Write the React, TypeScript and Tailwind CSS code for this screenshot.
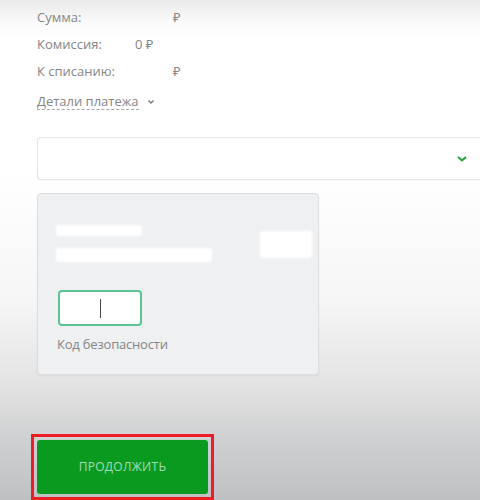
import React from 'react';

const Row: React.FC<{ label: string; value: React.ReactNode; valueClass: string }> = ({ label, value, valueClass }) => (
  <div className="flex items-center h-[27px]">
    <span className="w-[98px]">{label}</span>
    <span className={valueClass}>{value}</span>
  </div>
);

const Blot: React.FC<{ className: string }> = ({ className }) => (
  <div className={`bg-white rounded-[3px] blur-[1px] ${className}`} />
);

export default function App() {
  return (
    <div
      className="w-[480px] h-[500px] overflow-hidden text-[13px] text-[#858585] bg-[linear-gradient(180deg,#e9e9e9_0px,#fafafa_22px,#ffffff_36px,#ffffff_170px,#f6f6f6_300px,#e4e4e4_380px,#cfd0d1_440px,#bfc0c2_500px)]"
      style={{ fontFamily: '"Open Sans", "Noto Sans", sans-serif' }}
    >
      <div className="pl-[37px] pt-[4px]">
        <Row label="Сумма:" value="₽" valueClass="ml-[38px]" />
        <Row label="Комиссия:" value="0 ₽" valueClass="" />
        <Row label="К списанию:" value="₽" valueClass="ml-[38px]" />
        <div className="flex items-center h-[32px] gap-[8px]">
          <span className="border-b border-dashed border-[#a8a8a8] leading-[16px]">Детали платежа</span>
          <svg width="8" height="6" viewBox="0 0 8 6" className="mt-[1px]">
            <path d="M1.5 1.5 L4 4 L6.5 1.5" fill="none" stroke="#777" strokeWidth="1.4" />
          </svg>
        </div>
      </div>

      <div className="ml-[37px] mt-[20px] h-[43px] bg-white border border-[#e6e6e6] rounded-l-[4px] border-r-0 flex items-center justify-end pr-[12px] shadow-[0_1px_1px_rgba(0,0,0,0.03)]">
        <svg width="12" height="8" viewBox="0 0 12 8">
          <path d="M2 2 L6 5.5 L10 2" fill="none" stroke="#21a038" strokeWidth="2" />
        </svg>
      </div>

      <div className="ml-[37px] mt-[13px] w-[282px] h-[182px] bg-[#eef0f2] border border-[#dcdee0] rounded-[4px] pt-[31px] pl-[18px] shadow-[0_1px_2px_rgba(0,0,0,0.06)]">
        <div className="flex">
          <div className="flex flex-col gap-[12px]">
            <Blot className="w-[86px] h-[11px]" />
            <Blot className="w-[156px] h-[14px]" />
          </div>
          <Blot className="ml-[48px] mt-[6px] w-[52px] h-[27px]" />
        </div>
        <div className="mt-[28px] ml-[2px] w-[84px] h-[36px] bg-white border-2 border-[#5cc492] rounded-[4px] flex items-center justify-center">
          <div className="w-[1px] h-[19px] bg-[#444]" />
        </div>
        <div className="mt-[9px] ml-[1px] tracking-[-0.2px]">Код безопасности</div>
      </div>

      <div className="ml-[31px] mt-[59px] w-[183px] h-[66px] border-[3px] border-[#ee1c24] p-[3px]">
        <div className="w-full h-full bg-[#0a9a20] rounded-[3px] flex items-center justify-center text-[12px] font-medium tracking-[0.3px] text-[#a3dcba]">
          ПРОДОЛЖИТЬ
        </div>
      </div>
    </div>
  );
}
